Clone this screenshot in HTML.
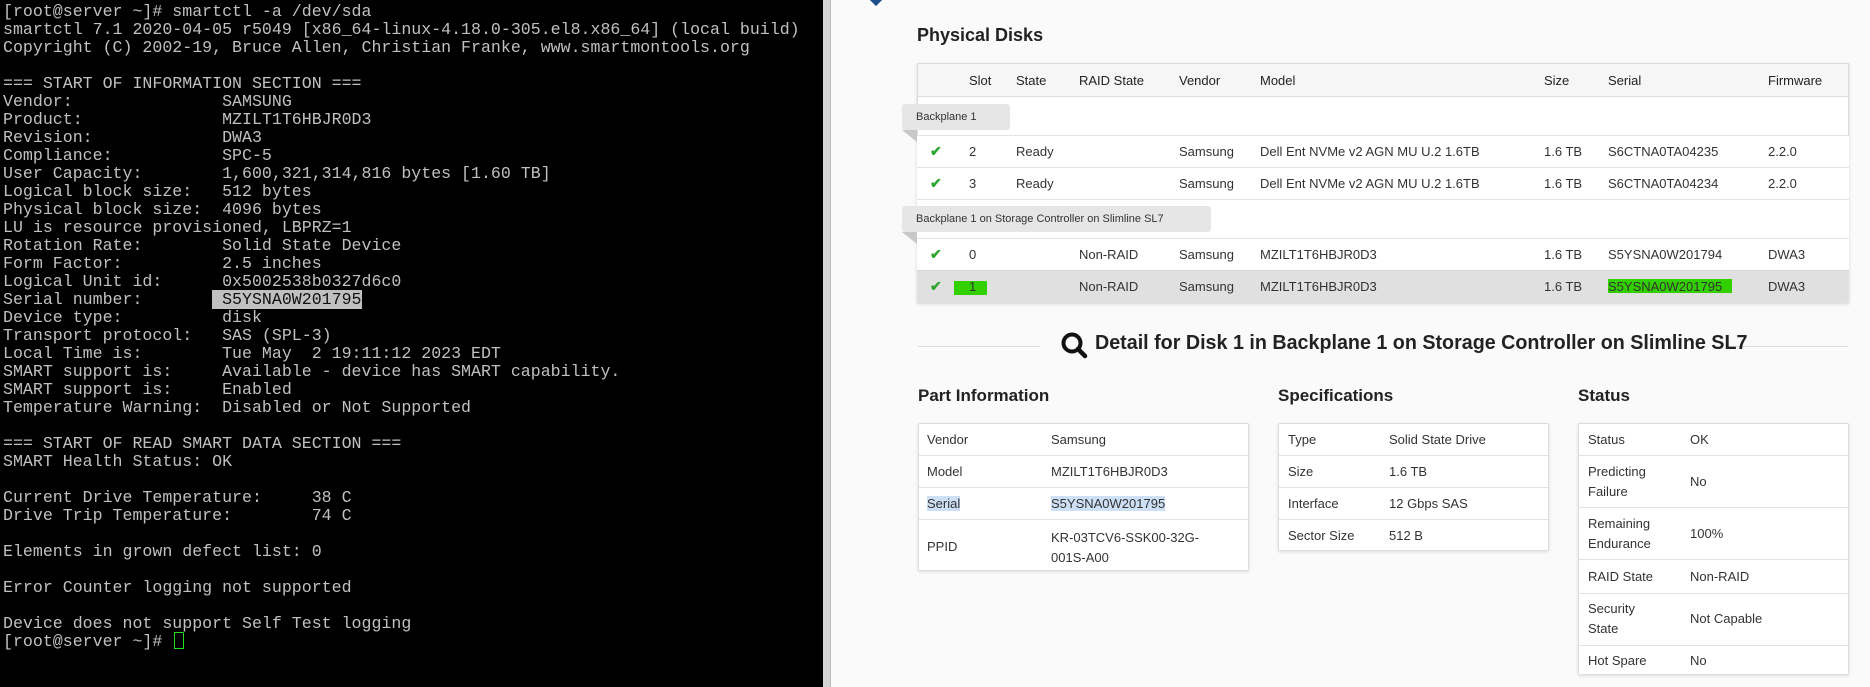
<!DOCTYPE html>
<html><head><meta charset="utf-8"><style>
*{margin:0;padding:0;box-sizing:border-box}
body{width:1870px;height:687px;overflow:hidden;background:#fafafa;position:relative;font-family:"Liberation Sans",sans-serif;color:#222}
#term{position:absolute;left:0;top:0;width:823px;height:687px;background:#000}
#term pre{position:absolute;left:3px;top:3px;font-family:"Liberation Mono",monospace;font-size:16.6px;line-height:18px;color:#c0c0c0;white-space:pre}
.hl{background:#c0c0c0;color:#111}
#strip{position:absolute;left:823px;top:0;width:8px;height:687px;background:#d4d4d4;border-right:1px solid #bbb}
.a{position:absolute;white-space:nowrap}
.t{font-size:13px;color:#333}
.hd{font-size:13px;color:#222}
.row{position:absolute;left:917px;width:932px;border-top:1px solid #e3e3e3;background:#fff}
.tab{position:absolute;left:902px;height:26px;background:#e6e6e6;border-radius:3px;font-size:11px;color:#333;padding-left:14px;line-height:26px}
.fold{position:absolute;left:902px;width:0;height:0;border-top:12px solid #c8c8c8;border-left:15px solid transparent}
.chk{position:absolute;color:#2ea52e;font-size:14px;font-weight:bold}
.box{position:absolute;background:#fff;border:1px solid #ddd;border-radius:2px;box-shadow:0 1px 3px rgba(0,0,0,.12)}
.ln{position:absolute;left:0;right:0;border-top:1px solid #e3e3e3}
h3{position:absolute;font-size:17px;font-weight:bold;color:#222;white-space:nowrap}
.sel{background:#cde0f5}
</style></head><body>
<div id="term"><pre>[root@server ~]# smartctl -a /dev/sda
smartctl 7.1 2020-04-05 r5049 [x86_64-linux-4.18.0-305.el8.x86_64] (local build)
Copyright (C) 2002-19, Bruce Allen, Christian Franke, www.smartmontools.org

=== START OF INFORMATION SECTION ===
Vendor:               SAMSUNG
Product:              MZILT1T6HBJR0D3
Revision:             DWA3
Compliance:           SPC-5
User Capacity:        1,600,321,314,816 bytes [1.60 TB]
Logical block size:   512 bytes
Physical block size:  4096 bytes
LU is resource provisioned, LBPRZ=1
Rotation Rate:        Solid State Device
Form Factor:          2.5 inches
Logical Unit id:      0x5002538b0327d6c0
Serial number:       <span class="hl"> S5YSNA0W201795</span>
Device type:          disk
Transport protocol:   SAS (SPL-3)
Local Time is:        Tue May  2 19:11:12 2023 EDT
SMART support is:     Available - device has SMART capability.
SMART support is:     Enabled
Temperature Warning:  Disabled or Not Supported

=== START OF READ SMART DATA SECTION ===
SMART Health Status: OK

Current Drive Temperature:     38 C
Drive Trip Temperature:        74 C

Elements in grown defect list: 0

Error Counter logging not supported

Device does not support Self Test logging
[root@server ~]# </pre>
<div style="position:absolute;left:174px;top:632px;width:10px;height:17px;border:1.5px solid #2d2"></div>
</div>
<div id="strip"></div>
<div style="position:absolute;left:871px;top:-6px;width:10px;height:10px;background:#1f4e8c;transform:rotate(45deg)"></div>

<h3 style="left:917px;top:25px;font-size:18px">Physical Disks</h3>

<div style="position:absolute;left:917px;top:63px;width:932px;height:240px;border:1px solid #ddd;background:#fff;box-shadow:0 1px 3px rgba(0,0,0,.15)"></div>
<div style="position:absolute;left:918px;top:64px;width:930px;height:33px;background:#f6f6f6;border-bottom:1px solid #ddd"></div>
<div class="a hd" style="left:969px;top:73px">Slot</div>
<div class="a hd" style="left:1016px;top:73px">State</div>
<div class="a hd" style="left:1079px;top:73px">RAID State</div>
<div class="a hd" style="left:1179px;top:73px">Vendor</div>
<div class="a hd" style="left:1260px;top:73px">Model</div>
<div class="a hd" style="left:1544px;top:73px">Size</div>
<div class="a hd" style="left:1608px;top:73px">Serial</div>
<div class="a hd" style="left:1768px;top:73px">Firmware</div>

<div class="row" style="top:135px;height:32px"></div>
<div class="row" style="top:167px;height:32px"></div>
<div class="row" style="top:199px;height:39px"></div>
<div class="row" style="top:238px;height:32px"></div>
<div class="row" style="top:270px;height:33px;background:#e0e0e0;border-top:1px solid #d6d6d6"></div>

<div class="tab" style="top:104px;width:108px">Backplane 1</div><div class="fold" style="top:130px"></div>
<div class="tab" style="top:206px;width:309px">Backplane 1 on Storage Controller on Slimline SL7</div><div class="fold" style="top:232px"></div>

<div class="chk" style="left:930px;top:143px">✔</div>
<div class="a t" style="left:969px;top:144px">2</div><div class="a t" style="left:1016px;top:144px">Ready</div><div class="a t" style="left:1179px;top:144px">Samsung</div><div class="a t" style="left:1260px;top:144px">Dell Ent NVMe v2 AGN MU U.2 1.6TB</div><div class="a t" style="left:1544px;top:144px">1.6 TB</div><div class="a t" style="left:1608px;top:144px">S6CTNA0TA04235</div><div class="a t" style="left:1768px;top:144px">2.2.0</div>

<div class="chk" style="left:930px;top:175px">✔</div>
<div class="a t" style="left:969px;top:176px">3</div><div class="a t" style="left:1016px;top:176px">Ready</div><div class="a t" style="left:1179px;top:176px">Samsung</div><div class="a t" style="left:1260px;top:176px">Dell Ent NVMe v2 AGN MU U.2 1.6TB</div><div class="a t" style="left:1544px;top:176px">1.6 TB</div><div class="a t" style="left:1608px;top:176px">S6CTNA0TA04234</div><div class="a t" style="left:1768px;top:176px">2.2.0</div>

<div class="chk" style="left:930px;top:246px">✔</div>
<div class="a t" style="left:969px;top:247px">0</div><div class="a t" style="left:1079px;top:247px">Non-RAID</div><div class="a t" style="left:1179px;top:247px">Samsung</div><div class="a t" style="left:1260px;top:247px">MZILT1T6HBJR0D3</div><div class="a t" style="left:1544px;top:247px">1.6 TB</div><div class="a t" style="left:1608px;top:247px">S5YSNA0W201794</div><div class="a t" style="left:1768px;top:247px">DWA3</div>

<div style="position:absolute;left:954px;top:281px;width:33px;height:14px;background:#33d000"></div>
<div style="position:absolute;left:1608px;top:279px;width:124px;height:14px;background:#33d000"></div>
<div class="chk" style="left:930px;top:278px">✔</div>
<div class="a t" style="left:969px;top:279px">1</div><div class="a t" style="left:1079px;top:279px">Non-RAID</div><div class="a t" style="left:1179px;top:279px">Samsung</div><div class="a t" style="left:1260px;top:279px">MZILT1T6HBJR0D3</div><div class="a t" style="left:1544px;top:279px">1.6 TB</div><div class="a t" style="left:1608px;top:279px">S5YSNA0W201795</div><div class="a t" style="left:1768px;top:279px">DWA3</div>

<div style="position:absolute;left:918px;top:346px;width:122px;border-top:1px solid #ddd"></div>
<div style="position:absolute;left:1726px;top:346px;width:122px;border-top:1px solid #ddd"></div>
<svg style="position:absolute;left:1060px;top:331px" width="28" height="28" viewBox="0 0 28 28"><circle cx="12" cy="12" r="8.5" fill="none" stroke="#111" stroke-width="4"/><line x1="18" y1="18" x2="25" y2="25" stroke="#111" stroke-width="4.5" stroke-linecap="round"/></svg>
<h3 style="left:1095px;top:332px;font-size:20px;transform:scaleX(.985);transform-origin:left">Detail for Disk 1 in Backplane 1 on Storage Controller on Slimline SL7</h3>

<h3 style="left:918px;top:386px">Part Information</h3>
<h3 style="left:1278px;top:386px">Specifications</h3>
<h3 style="left:1578px;top:386px">Status</h3>

<div class="box" style="left:918px;top:423px;width:331px;height:148px">
<div class="ln" style="top:31px"></div><div class="ln" style="top:63px"></div><div class="ln" style="top:95px"></div>
<div class="a t" style="left:8px;top:8px">Vendor</div><div class="a t" style="left:132px;top:8px">Samsung</div>
<div class="a t" style="left:8px;top:40px">Model</div><div class="a t" style="left:132px;top:40px">MZILT1T6HBJR0D3</div>
<div class="a t" style="left:8px;top:72px"><span class="sel">Serial</span></div><div class="a t" style="left:132px;top:72px"><span class="sel">S5YSNA0W201795</span></div>
<div class="a t" style="left:8px;top:115px">PPID</div><div class="a t" style="left:132px;top:104px;line-height:20px">KR-03TCV6-SSK00-32G-<br>001S-A00</div>
</div>

<div class="box" style="left:1278px;top:423px;width:271px;height:128px">
<div class="ln" style="top:31px"></div><div class="ln" style="top:63px"></div><div class="ln" style="top:95px"></div>
<div class="a t" style="left:9px;top:8px">Type</div><div class="a t" style="left:110px;top:8px">Solid State Drive</div>
<div class="a t" style="left:9px;top:40px">Size</div><div class="a t" style="left:110px;top:40px">1.6 TB</div>
<div class="a t" style="left:9px;top:72px">Interface</div><div class="a t" style="left:110px;top:72px">12 Gbps SAS</div>
<div class="a t" style="left:9px;top:104px">Sector Size</div><div class="a t" style="left:110px;top:104px">512 B</div>
</div>

<div class="box" style="left:1578px;top:423px;width:271px;height:252px">
<div class="ln" style="top:31px"></div><div class="ln" style="top:83px"></div><div class="ln" style="top:135px"></div><div class="ln" style="top:169px"></div><div class="ln" style="top:221px"></div>
<div class="a t" style="left:9px;top:8px">Status</div><div class="a t" style="left:111px;top:8px">OK</div>
<div class="a t" style="left:9px;top:38px;line-height:20px">Predicting<br>Failure</div><div class="a t" style="left:111px;top:50px">No</div>
<div class="a t" style="left:9px;top:90px;line-height:20px">Remaining<br>Endurance</div><div class="a t" style="left:111px;top:102px">100%</div>
<div class="a t" style="left:9px;top:145px">RAID State</div><div class="a t" style="left:111px;top:145px">Non-RAID</div>
<div class="a t" style="left:9px;top:175px;line-height:20px">Security<br>State</div><div class="a t" style="left:111px;top:187px">Not Capable</div>
<div class="a t" style="left:9px;top:229px">Hot Spare</div><div class="a t" style="left:111px;top:229px">No</div>
</div>
</body></html>
